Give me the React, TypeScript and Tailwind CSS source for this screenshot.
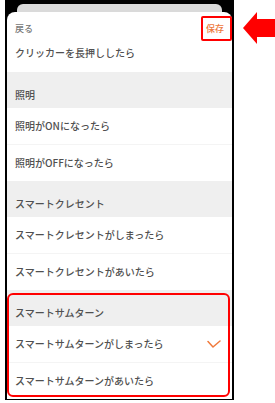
import React from 'react';

type Item = { label: string; checked?: boolean };
type Section = { title: string; items: Item[] };

const sections: Section[] = [
  { title: '照明', items: [{ label: '照明がONになったら' }, { label: '照明がOFFになったら' }] },
  {
    title: 'スマートクレセント',
    items: [{ label: 'スマートクレセントがしまったら' }, { label: 'スマートクレセントがあいたら' }],
  },
  {
    title: 'スマートサムターン',
    items: [{ label: 'スマートサムターンがしまったら', checked: true }, { label: 'スマートサムターンがあいたら' }],
  },
];

const Check = () => (
  <svg width="14" height="9" viewBox="0 0 14 9" fill="none">
    <path d="M1 1.5 L6 7 L13 1" stroke="#f07a3c" strokeWidth="1.5" strokeLinecap="round" strokeLinejoin="round" />
  </svg>
);

const App = () => {
  return (
    <div
      className="w-[275px] h-[403px] bg-white flex items-start"
      style={{ fontFamily: '"Noto Sans CJK JP", "Noto Sans", sans-serif' }}
    >
      <div className="ml-[5px] w-[229px] h-[400px] bg-black border-x-2 border-b-2 border-black flex flex-col relative">
        {/* sheet stacked behind */}
        <div className="h-[12px] shrink-0 flex justify-center items-end">
          <div className="w-[205px] h-[8px] bg-[#dadada] rounded-t-[6px]" />
        </div>

        <div className="flex-1 bg-white rounded-t-[8px] flex flex-col">
          <div className="h-[28px] flex items-end justify-between pb-[5px] pl-2 pr-[8px] relative">
            <span className="text-[9px] leading-[12px] font-medium text-[#777777]">戻る</span>
            <span className="text-[9px] leading-[12px] font-medium text-[#ee7a3e]">保存</span>
            <div className="absolute right-0 top-[4px] w-[31px] h-[25px] border-2 border-[#ff0000] rounded-[2px]" />
          </div>

          <div className="h-[32px] pt-[7px] pl-2 text-[10px] leading-[12px] font-medium text-[#505050]">
            クリッカーを長押ししたら
          </div>

          {sections.map((section) => (
            <div key={section.title}>
              <div className="h-[36px] bg-[#efefef] flex items-end pb-[7px] pl-2 text-[10px] leading-[12px] font-medium text-[#505050]">
                {section.title}
              </div>
              {section.items.map((item, i) => (
                <div
                  key={item.label}
                  className={`${i === 0 ? 'h-[37px] border-b border-[#f4f4f4]' : 'h-[36px]'} flex items-center justify-between pl-2 pr-[11px] text-[10px] leading-[12px] font-medium text-[#505050]`}
                >
                  <span>{item.label}</span>
                  {item.checked && <Check />}
                </div>
              ))}
            </div>
          ))}
        </div>

        {/* annotation around the thumb-turn section */}
        <div className="absolute left-0 top-[293px] w-[223px] h-[104px] border-2 border-[#ff0000] rounded-[6px]" />
      </div>

      <svg width="41" height="32" viewBox="0 0 41 32" className="mt-[12px]">
        <polygon points="9,16 23,0 23,7 41,7 41,25 23,25 23,32" fill="#ff0000" />
      </svg>
    </div>
  );
};

export default App;
